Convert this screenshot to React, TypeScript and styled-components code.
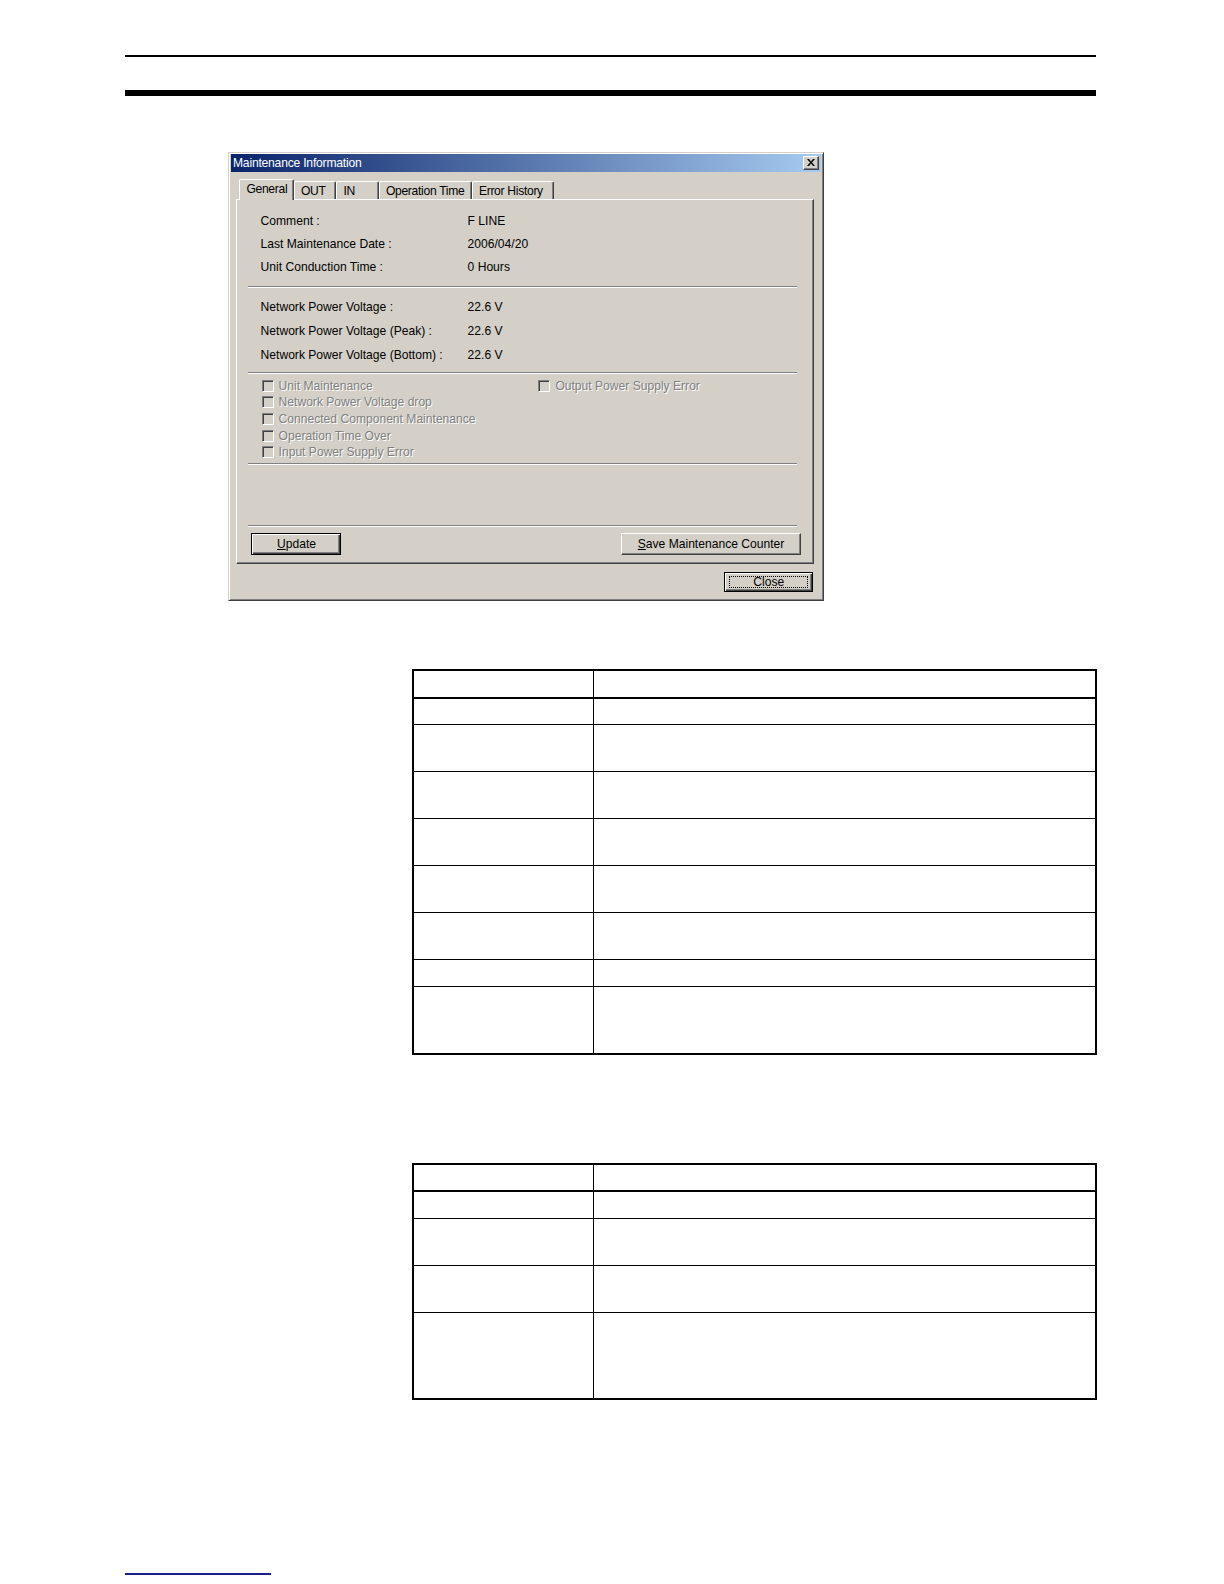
import styled, { createGlobalStyle, css } from 'styled-components';

const GlobalStyle = createGlobalStyle`
	html, body {
		margin: 0;
		padding: 0;
		background: #ffffff;
	}
	body {
		font-family: 'Liberation Sans', Arial, sans-serif;
	}
`;

const infoRows = [
	{ label: 'Comment :', value: 'F LINE' },
	{ label: 'Last Maintenance Date :', value: '2006/04/20' },
	{ label: 'Unit Conduction Time :', value: '0 Hours' },
];

const voltageRows = [
	{ label: 'Network Power Voltage :', value: '22.6 V' },
	{ label: 'Network Power Voltage (Peak) :', value: '22.6 V' },
	{ label: 'Network Power Voltage (Bottom) :', value: '22.6 V' },
];

const leftChecks = [
	'Unit Maintenance',
	'Network Power Voltage drop',
	'Connected Component Maintenance',
	'Operation Time Over',
	'Input Power Supply Error',
];

const tabs = [
	{ label: 'General', width: 54.5 },
	{ label: 'OUT', width: 42.5 },
	{ label: 'IN', width: 42.5 },
	{ label: 'Operation Time', width: 93 },
	{ label: 'Error History', width: 82 },
];

const firstTableRows = [28, 26, 47, 47, 47, 47, 47, 27, 68];
const secondTableRows = [27, 27, 47, 47, 87];

export default function App() {
	return (
		<Page>
			<GlobalStyle />
			<TopRule />
			<ThickRule />

			<Dialog>
				<TitleBar>
					<Title>Maintenance Information</Title>
					<CloseBox>
						<svg width="8" height="7" viewBox="0 0 8 7">
							<path d="M0 0h2l2 2.5L6 0h2L5 3.5 8 7H6L4 4.5 2 7H0l3-3.5z" fill="#000" />
						</svg>
					</CloseBox>
				</TitleBar>

				<DialogBody>
					<TabStrip>
						{tabs.map((tab, i) => (
							<Tab key={tab.label} $active={i === 0} $width={tab.width}>
								{tab.label}
							</Tab>
						))}
					</TabStrip>

					<Panel>
						<InfoBlock $top={9.6}>
							{infoRows.map((row) => (
								<InfoRow key={row.label} $height={23.2}>
									<span>{row.label}</span>
									<span>{row.value}</span>
								</InfoRow>
							))}
						</InfoBlock>

						<Separator $top={7.7} />

						<InfoBlock $top={6.5}>
							{voltageRows.map((row) => (
								<InfoRow key={row.label} $height={24.2}>
									<span>{row.label}</span>
									<span>{row.value}</span>
								</InfoRow>
							))}
						</InfoBlock>

						<Separator $top={4.7} />

						<CheckArea>
							<CheckColumn>
								{leftChecks.map((label) => (
									<CheckItem key={label}>
										<CheckBox />
										<CheckLabel>{label}</CheckLabel>
									</CheckItem>
								))}
							</CheckColumn>
							<CheckColumn>
								<CheckItem>
									<CheckBox />
									<CheckLabel>Output Power Supply Error</CheckLabel>
								</CheckItem>
							</CheckColumn>
						</CheckArea>

						<Separator $top={2.2} />
						<Separator $top={59.7} />

						<ButtonRow>
							<Button $default $width={90} $height={22.2}>
								<u>U</u>pdate
							</Button>
							<Button $width={180} $height={22.2}>
								<u>S</u>ave Maintenance Counter
							</Button>
						</ButtonRow>
					</Panel>

					<DialogFooter>
						<Button $default $width={89} $height={20.2}>
							<FocusRing>Close</FocusRing>
						</Button>
					</DialogFooter>
				</DialogBody>
			</Dialog>

			<DocTable $top={68}>
				<tbody>
					{firstTableRows.map((h, i) => (
						<TableRow key={i} $height={h} $header={i === 0}>
							<KeyCell />
							<Cell />
						</TableRow>
					))}
				</tbody>
			</DocTable>

			<DocTable $top={108}>
				<tbody>
					{secondTableRows.map((h, i) => (
						<TableRow key={i} $height={h} $header={i === 0}>
							<KeyCell />
							<Cell />
						</TableRow>
					))}
				</tbody>
			</DocTable>

			<FooterRule />
		</Page>
	);
}

const Page = styled.div`
	box-sizing: border-box;
	width: 1224px;
	min-height: 1584px;
	padding: 55px 0 0 125px;
	overflow: hidden;
	background: #ffffff;
`;

const TopRule = styled.div`
	width: 971px;
	height: 1.5px;
	background: #000000;
`;

const ThickRule = styled.div`
	width: 971px;
	margin-top: 33.5px;
	height: 6px;
	background: #000000;
`;

const Dialog = styled.section`
	box-sizing: border-box;
	width: 596px;
	margin: 55.5px 0 0 103px;
	padding: 1px 2px 2px;
	background: #d4d0c8;
	border: 1px solid;
	border-color: #d4d0c8 #404040 #404040 #d4d0c8;
	box-shadow: inset 1px 1px #ffffff, inset -1px -1px #808080;
	font-size: 12.1px;
	color: #000000;
`;

const TitleBar = styled.header`
	display: flex;
	align-items: center;
	justify-content: space-between;
	height: 18px;
	padding: 0 2px;
	background: linear-gradient(to right, #0a246a, #a6caf0);
`;

const Title = styled.span`
	color: #ffffff;
	font-size: 12.1px;
	letter-spacing: -0.2px;
`;

const CloseBox = styled.div`
	box-sizing: border-box;
	display: flex;
	align-items: center;
	justify-content: center;
	width: 16px;
	height: 14px;
	background: #d4d0c8;
	border: 1px solid;
	border-color: #ffffff #404040 #404040 #ffffff;
	box-shadow: inset -1px -1px #808080;
`;

const DialogBody = styled.div`
	padding: 7px 6.8px 6.5px 5.4px;
`;

const TabStrip = styled.div`
	display: flex;
	align-items: flex-end;
	height: 20px;
	padding-left: 3px;
`;

const Tab = styled.div<{ $active?: boolean; $width: number }>`
	box-sizing: border-box;
	position: relative;
	width: ${(p) => p.$width}px;
	height: 18px;
	padding: 2px 0 0 6px;
	background: #d4d0c8;
	border-top: 1px solid #ffffff;
	border-left: 1px solid #ffffff;
	border-right: 1px solid #404040;
	border-radius: 2px 2px 0 0;
	box-shadow: inset -1px 0 #808080;
	font-size: 12.1px;
	letter-spacing: -0.3px;
	white-space: nowrap;
	overflow: hidden;

	${(p) =>
		p.$active &&
		css`
			height: 21px;
			margin-bottom: -1px;
			z-index: 1;
		`}
`;

const Panel = styled.div`
	box-sizing: border-box;
	display: flex;
	flex-direction: column;
	height: 365px;
	border: 1px solid;
	border-color: #ffffff #404040 #404040 #ffffff;
	box-shadow: inset -1px -1px #808080;
`;

const InfoBlock = styled.div<{ $top: number }>`
	margin-top: ${(p) => p.$top}px;
	padding-left: 23.2px;
`;

const InfoRow = styled.div<{ $height: number }>`
	display: grid;
	grid-template-columns: 207px 1fr;
	align-items: center;
	height: ${(p) => p.$height}px;
	white-space: nowrap;
`;

const Separator = styled.div<{ $top: number }>`
	margin: ${(p) => p.$top}px 16.2px 0 11.1px;
	height: 0;
	border-top: 1px solid #808080;
	border-bottom: 1px solid #ffffff;
`;

const CheckArea = styled.div`
	display: flex;
	margin-top: 3.25px;
	padding-left: 24.2px;
`;

const CheckColumn = styled.div`
	display: flex;
	flex-direction: column;

	&:first-child {
		width: 276.8px;
	}
`;

const CheckItem = styled.div`
	display: flex;
	align-items: center;
	gap: 5px;
	height: 16.7px;
`;

const CheckBox = styled.span`
	box-sizing: border-box;
	width: 12px;
	height: 12px;
	background: #d4d0c8;
	border: 1px solid;
	border-color: #808080 #ffffff #ffffff #808080;
	box-shadow: inset 1px 1px #404040, inset -1px -1px #d4d0c8;
`;

const CheckLabel = styled.span`
	color: #808080;
	text-shadow: 1px 1px #ffffff;
	white-space: nowrap;
`;

const ButtonRow = styled.div`
	display: flex;
	justify-content: space-between;
	margin-top: 6px;
	padding: 0 12.2px 0 14.1px;
`;

const Button = styled.button<{ $default?: boolean; $width: number; $height: number }>`
	box-sizing: border-box;
	display: flex;
	align-items: center;
	justify-content: center;
	width: ${(p) => p.$width}px;
	height: ${(p) => p.$height}px;
	padding: 0;
	background: #d4d0c8;
	font-family: 'Liberation Sans', Arial, sans-serif;
	font-size: 12.1px;
	line-height: 1;
	color: #000000;
	border: 1px solid;
	border-color: #ffffff #404040 #404040 #ffffff;
	box-shadow: inset -1px -1px #808080;

	${(p) =>
		p.$default &&
		css`
			border-color: #000000;
			box-shadow: inset 1px 1px #ffffff, inset -1px -1px #404040, inset -2px -2px #808080;
		`}
`;

const FocusRing = styled.span`
	box-sizing: border-box;
	display: flex;
	align-items: center;
	justify-content: center;
	width: calc(100% - 8px);
	height: calc(100% - 6px);
	border: 1px dotted #000000;
`;

const DialogFooter = styled.div`
	display: flex;
	justify-content: flex-end;
	margin-top: 8px;
	padding-right: 1px;
`;

const DocTable = styled.table<{ $top: number }>`
	width: 685px;
	margin: ${(p) => p.$top}px 0 0 287px;
	border-collapse: collapse;
	border: 2px solid #000000;
	table-layout: fixed;
`;

const TableRow = styled.tr<{ $height: number; $header?: boolean }>`
	height: ${(p) => p.$height}px;

	td {
		border-bottom: ${(p) => (p.$header ? 2 : 1)}px solid #000000;
	}
`;

const Cell = styled.td`
	padding: 0;
	border-left: 1px solid #000000;
`;

const KeyCell = styled(Cell)`
	width: 179px;
	border-left: none;
`;

const FooterRule = styled.div`
	width: 146px;
	height: 2px;
	margin-top: 173px;
	background: #1c1c8a;
`;
